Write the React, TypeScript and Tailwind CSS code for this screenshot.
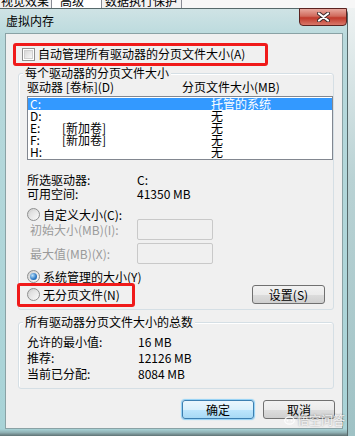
import React from "react";

function CheckBox() {
  return (
    <span className="flex h-[13px] w-[13px] shrink-0 items-center justify-center border border-[#8e8f8f] bg-white">
      <span className="h-[9px] w-[9px] border border-[#cfcfcf] bg-[linear-gradient(135deg,#d8d8d8,#f7f7f7)]" />
    </span>
  );
}

function Radio({ checked }: { checked?: boolean }) {
  return (
    <span className="flex h-[13px] w-[13px] shrink-0 items-center justify-center rounded-full border border-[#8e8f8f] bg-[linear-gradient(135deg,#cfcfcf,#fcfcfc)]">
      {checked ? (
        <span className="h-[7px] w-[7px] rounded-full bg-[radial-gradient(circle_at_35%_35%,#bfe4fb,#2a78c6_60%,#13508f)]" />
      ) : (
        <span className="h-[7px] w-[7px] rounded-full bg-[linear-gradient(135deg,#dcdcdc,#f4f4f4)]" />
      )}
    </span>
  );
}

function Btn({ children, primary, w }: { children: React.ReactNode; primary?: boolean; w: string }) {
  const look = primary
    ? "border-[#3c7fb1] bg-[linear-gradient(#eaf6fd_0%,#d9f0fc_50%,#bee6fd_50%,#a7d9f5_100%)] shadow-[0_0_1px_1px_#8fd0f5]"
    : "border-[#707070] bg-[linear-gradient(#f2f2f2_0%,#ebebeb_50%,#dddddd_50%,#cfcfcf_100%)]";
  return (
    <div className={`flex h-[19px] items-center justify-center rounded-[3px] border ${look} ${w}`}>
      <span className="leading-[12px]">{children}</span>
    </div>
  );
}

function TextBox() {
  return <div className="h-[21px] w-[76px] rounded-[2px] border border-[#c9c9c9] bg-[#f0f0f0]" />;
}

function Tabs() {
  return (
    <div className="flex h-[8px] overflow-hidden bg-white text-[12px] leading-[12px]">
      <div className="w-[52px] shrink-0 border-r border-[#898c95] bg-[#f2f2f2] pl-[1px]">
        <div className="-mt-[5px]">视觉效果</div>
      </div>
      <div className="w-[50px] shrink-0 border-r border-[#898c95] bg-white pl-[8px]">
        <div className="-mt-[5px]">高级</div>
      </div>
      <div className="w-[80px] shrink-0 border-r border-[#898c95] bg-[#f2f2f2] pl-[3px]">
        <div className="-mt-[5px]">数据执行保护</div>
      </div>
      <div className="flex-1 bg-[#f7f7f7]" />
    </div>
  );
}

const drives = [
  { d: "C:", label: "", size: "托管的系统", sel: true },
  { d: "D:", label: "", size: "无" },
  { d: "E:", label: "[新加卷]", size: "无" },
  { d: "F:", label: "[新加卷]", size: "无" },
  { d: "H:", label: "", size: "无" },
];

export default function App() {
  return (
    <div className="relative flex h-[436px] w-[355px] flex-col overflow-hidden bg-[#dfe8e9] font-['Noto_Sans_CJK_SC','Noto_Sans',sans-serif] text-[12px] leading-[12px] text-black">
      <Tabs />
      <div className="flex h-[428px]">
        <div className="flex w-[348px] shrink-0 flex-col rounded-tr-[6px] border-r border-t border-[#56696b] bg-[linear-gradient(#cfe3e5,#b8d9dc_30px,#a8d3d7)]">
          <div className="flex h-[24px] shrink-0">
            <span className="self-center pl-[6px]">虚拟内存</span>
            <div className="-mt-[1px] ml-auto flex h-[18px] w-[48px] items-center justify-center rounded-b-[4px] border border-[#5b2320] bg-[linear-gradient(#e8a89e,#d06a5c_45%,#c0392b_55%,#d9786a)]">
              <svg width="13" height="10" viewBox="0 0 13 10">
                <path d="M2 1.5 L11 8.5 M11 1.5 L2 8.5" stroke="#3b2a2a" strokeWidth="4" strokeLinecap="round" />
                <path d="M2 1.5 L11 8.5 M11 1.5 L2 8.5" stroke="#ffffff" strokeWidth="2.2" strokeLinecap="round" />
              </svg>
            </div>
          </div>
          <div className="flex h-[396px] shrink-0 pl-[5px]">
            <div className="relative flex h-[396px] w-[338px] flex-col border border-[#8aa2a5] bg-[#f0f0f0]">
              <div className="ml-[16px] mt-[13px] flex h-[14px] items-center">
                <CheckBox />
                <span className="ml-[3px]">自动管理所有驱动器的分页文件大小(A)</span>
              </div>

              <div className="relative ml-[12px] mt-[12px] flex h-[237px] w-[316px] shrink-0 flex-col rounded-[3px] border border-[#d5dfe5] px-[8px] pt-[7px] shadow-[inset_1px_1px_0_#fff]">
                <span className="absolute left-[4px] top-[-7px] bg-[#f0f0f0] px-[2px]">每个驱动器的分页文件大小</span>
                <div className="flex h-[12px]">
                  <span className="w-[155px]">驱动器 [卷标](D)</span>
                  <span>分页文件大小(MB)</span>
                </div>
                <div className="mt-[3px] flex h-[64px] w-[306px] flex-col border border-[#828790] bg-white py-[1px]">
                  {drives.map((r) => (
                    <div key={r.d} className={`flex h-[12px] items-center pl-[2px] ${r.sel ? "bg-[#3399ff] text-white" : ""}`}>
                      <span className="w-[32px]">{r.d}</span>
                      <span className="w-[149px]">{r.label}</span>
                      <span>{r.size}</span>
                    </div>
                  ))}
                </div>
                <div className="mt-[14px] flex h-[12px]">
                  <span className="w-[110px]">所选驱动器:</span>
                  <span>C:</span>
                </div>
                <div className="mt-[2px] flex h-[12px]">
                  <span className="w-[110px]">可用空间:</span>
                  <span>41350 MB</span>
                </div>
                <div className="mt-[8px] flex h-[13px] items-center">
                  <Radio />
                  <span className="ml-[3px]">自定义大小(C):</span>
                </div>
                <div className="-mt-[2px] flex h-[21px] items-center pl-[3px] text-[#9a9a9a]">
                  <span className="w-[107px]">初始大小(MB)(I):</span>
                  <TextBox />
                </div>
                <div className="mt-[3px] flex h-[21px] items-center pl-[3px] text-[#9a9a9a]">
                  <span className="w-[107px]">最大值(MB)(X):</span>
                  <TextBox />
                </div>
                <div className="mt-[6px] flex h-[13px] items-center">
                  <Radio checked />
                  <span className="ml-[3px]">系统管理的大小(Y)</span>
                </div>
                <div className="mt-[2px] flex h-[19px] items-center justify-between">
                  <div className="flex items-center">
                    <Radio />
                    <span className="ml-[3px]">无分页文件(N)</span>
                  </div>
                  <Btn w="w-[73px]">设置(S)</Btn>
                </div>
              </div>

              <div className="relative ml-[12px] mt-[12px] flex h-[67px] w-[316px] shrink-0 flex-col gap-[4px] rounded-[3px] border border-[#d5dfe5] px-[8px] pt-[13px] shadow-[inset_1px_1px_0_#fff]">
                <span className="absolute left-[4px] top-[-7px] bg-[#f0f0f0] px-[2px]">所有驱动器分页文件大小的总数</span>
                <div className="flex h-[12px]">
                  <span className="w-[111px]">允许的最小值:</span>
                  <span>16 MB</span>
                </div>
                <div className="flex h-[12px]">
                  <span className="w-[111px]">推荐:</span>
                  <span>12126 MB</span>
                </div>
                <div className="flex h-[12px]">
                  <span className="w-[111px]">当前已分配:</span>
                  <span>8084 MB</span>
                </div>
              </div>

              <div className="mt-[11px] flex justify-end gap-[9px] pr-[7px]">
                <Btn primary w="w-[72px]">确定</Btn>
                <Btn w="w-[72px]">取消</Btn>
              </div>

              <div className="pointer-events-none absolute left-[7px] top-[9px] h-[23px] w-[255px] rounded-[3px] border-[3px] border-[#f01a1a]" />
              <div className="pointer-events-none absolute left-[11px] top-[249px] h-[24px] w-[118px] rounded-[3px] border-[3px] border-[#f01a1a]" />
            </div>
          </div>
          <div className="flex-1 bg-[linear-gradient(#a8d3d7,#8fb0b3_50%,#5f7274)]" />
        </div>
        <div className="flex-1 bg-[linear-gradient(#eef2f2,#b9d2d4_40%,#9fc2c5)]" />
      </div>
      <div className="pointer-events-none absolute left-[284px] top-[414px] flex items-center gap-[2px] text-[12px] text-[rgba(255,255,255,0.85)] [text-shadow:0_0_2px_rgba(0,0,0,0.45)]">
        <svg width="11" height="9" viewBox="0 0 11 9">
          <ellipse cx="5.5" cy="4.5" rx="4.8" ry="3.6" fill="none" stroke="rgba(255,255,255,0.85)" strokeWidth="1.3" />
          <circle cx="3.5" cy="4.5" r="0.9" fill="rgba(255,255,255,0.85)" />
          <circle cx="7.5" cy="4.5" r="0.9" fill="rgba(255,255,255,0.85)" />
        </svg>
        <span>悟空问答</span>
      </div>
    </div>
  );
}
